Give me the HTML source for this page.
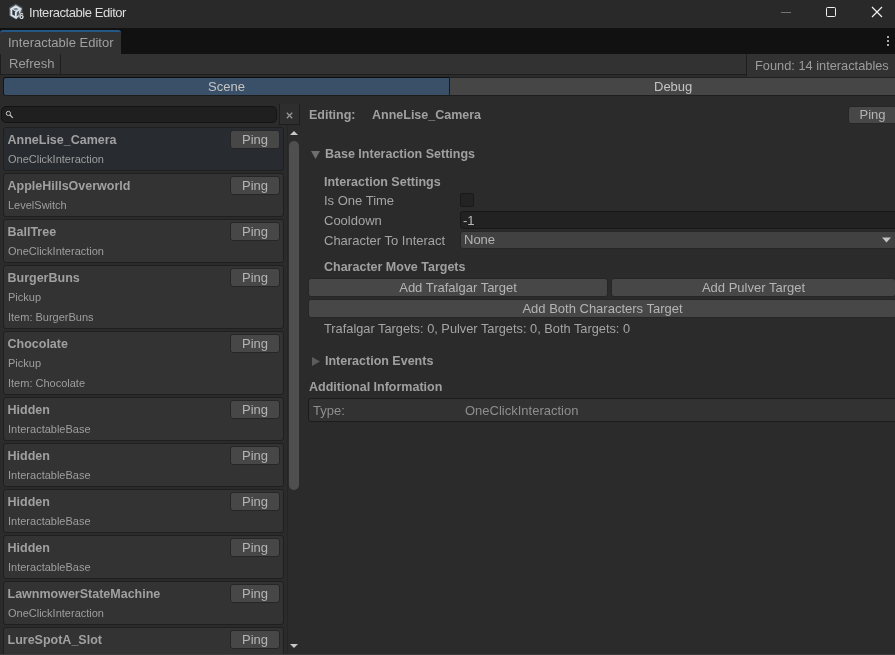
<!DOCTYPE html>
<html><head><meta charset="utf-8">
<style>
*{box-sizing:border-box;margin:0;padding:0}
html,body{width:895px;height:655px;overflow:hidden;background:#2b2b2b;will-change:transform;font-family:"Liberation Sans",sans-serif;color:#bdbdbd}
.abs{position:absolute}
#title{left:0;top:0;width:895px;height:28px;background:#292929}
#title .t{left:29px;top:5px;font-size:13px;letter-spacing:-0.45px;color:#dcdcdc;white-space:nowrap}
#tabs{left:0;top:28px;width:895px;height:26px;background:#111111}
#tab{left:0;top:2px;width:121px;height:24px;background:#323232;border-top:2px solid #265886;border-radius:3px 3px 0 0}
#tab .t{left:8px;top:3px;font-size:13px;color:#a0a0a0;white-space:nowrap}
#toolbar{left:0;top:54px;width:895px;height:23px;background:#323232}
#band{left:0;top:75px;width:895px;height:23px;background:transparent}
.txt{position:absolute;white-space:nowrap}
.item{position:absolute;left:3px;width:281px;background:#333333;border:1px solid #1f1f1f;border-radius:3px}
.item.sel{background:#282b30}
.item .n{position:absolute;left:3.5px;top:5px;font-size:12.5px;font-weight:bold;color:#a0a0a0;white-space:nowrap}
.item .s1{position:absolute;left:4px;top:25px;font-size:11px;color:#9e9e9e;white-space:nowrap}
.item .s2{position:absolute;left:4px;top:45px;font-size:11px;color:#9e9e9e;white-space:nowrap}
.ping{position:absolute;left:226px;top:2px;width:50px;height:19px;background:#474747;border:1px solid #262626;border-radius:3px;font-size:13px;color:#b4b4b4;text-align:center;line-height:18px}
.btn{position:absolute;height:18px;background:#474747;border:1px solid #262626;border-radius:3px;font-size:13px;color:#b4b4b4;text-align:center;line-height:16px;white-space:nowrap}
.lbl{position:absolute;font-size:13px;color:#a4a4a4;white-space:nowrap}
.bold{font-weight:bold;font-size:12.5px;color:#a0a0a0}
</style></head><body>
<div id="title" class="abs">
  <svg class="abs" style="left:8px;top:3px" width="17" height="18" viewBox="0 0 17 18">
    <path d="M7.8 0.8 L14.4 4.6 L14.4 12.7 L7.8 16.4 L1.3 12.7 L1.3 4.6 Z" fill="#56646f"/>
    <path d="M7.8 3.4 L12.3 6 L7.8 8.7 L3.4 6 Z" fill="#7d8b96" stroke="#dde4ea" stroke-width="1.9"/>
    <path d="M3.4 6 L3.4 12 L7.8 14.5 L7.8 8.7" fill="#2a333c" stroke="#dde4ea" stroke-width="1.9"/>
    <path d="M7.8 14.5 L11.2 12.6 L12.3 6" fill="#2a333c" stroke="#dde4ea" stroke-width="1.5"/>
    <text x="11" y="15.8" font-family="Liberation Sans" font-weight="bold" font-size="8.8" fill="#e8e8e8" stroke="#242424" stroke-width="1.1" paint-order="stroke">6</text>
  </svg>
  <div class="abs t">Interactable Editor</div>
  <div class="abs" style="left:781px;top:12px;width:10px;height:1px;background:#747474"></div>
  <div class="abs" style="left:826px;top:7px;width:10px;height:10px;border:1.3px solid #f0f0f0;border-radius:1.5px"></div>
  <svg class="abs" style="left:871px;top:6px" width="12" height="12" viewBox="0 0 12 12"><path d="M1 1 L11 11 M11 1 L1 11" stroke="#f0f0f0" stroke-width="1.2"/></svg>
</div>
<div id="tabs" class="abs">
  <div id="tab" class="abs"><div class="abs t">Interactable Editor</div></div>
  <div class="abs" style="left:887px;top:8px;width:2px;height:2px;background:#a8a8a8"></div>
  <div class="abs" style="left:887px;top:12px;width:2px;height:2px;background:#a8a8a8"></div>
  <div class="abs" style="left:887px;top:16px;width:2px;height:2px;background:#a8a8a8"></div>
</div>
<div id="toolbar" class="abs">
  <div class="abs" style="left:0;top:20px;width:747px;height:1px;background:#1e1e1e"></div>
  <div class="abs" style="left:0;top:21px;width:747px;height:2px;background:#2b2b2b"></div>
  <div class="abs" style="left:0;top:0;width:1px;height:20px;background:#1e1e1e"></div>
  <div class="abs" style="left:60px;top:0;width:1px;height:20px;background:#1e1e1e"></div>
  <div class="txt" style="left:9px;top:2px;font-size:13px;color:#9e9e9e">Refresh</div>
  <div class="abs" style="left:746px;top:0;width:1px;height:22px;background:#1e1e1e"></div>
  <div class="txt" style="left:755px;top:4px;font-size:12.8px;color:#9c9c9c">Found: 14 interactables</div>
</div>
<div id="band" class="abs">
  <div class="abs" style="left:3px;top:2px;width:447px;height:19px;background:#3a5068;border:1px solid #151515;border-top-color:#0c0c0c;border-bottom-color:#1c1c1c;border-radius:3px 0 0 3px"></div>
  <div class="abs" style="left:449px;top:2px;width:447px;height:19px;background:#464646;border:1px solid #1a1a1a;border-top-color:#202020;border-bottom-color:#1e1e1e"></div>
  <div class="txt" style="left:208px;top:4px;font-size:13px;color:#c4c4c4">Scene</div>
  <div class="txt" style="left:654px;top:4px;font-size:13px;color:#c4c4c4">Debug</div>
</div>

<!-- left panel -->
<div class="abs" style="left:1px;top:106px;width:276px;height:17px;background:#1f1f1f;border:1px solid #141414;border-radius:5px"></div>
<svg class="abs" style="left:5px;top:110px" width="9" height="9" viewBox="0 0 9 9"><circle cx="3.4" cy="3.4" r="2.1" fill="none" stroke="#c4c4c4" stroke-width="1"/><path d="M5 5 L7.8 7.8" stroke="#c4c4c4" stroke-width="1.2"/></svg>
<div class="abs" style="left:279px;top:104px;width:21px;height:21px;border:1px solid #1e1e1e;border-top:none;background:#2e2e2e"></div>
<svg class="abs" style="left:286px;top:111.5px" width="7" height="7" viewBox="0 0 7 7"><path d="M0.8 0.8 L6.2 6.2 M6.2 0.8 L0.8 6.2" stroke="#969696" stroke-width="1.3"/></svg>

<div class="item sel" style="top:127px;height:44px"><div class="n">AnneLise_Camera</div><div class="s1">OneClickInteraction</div><div class="ping">Ping</div></div>
<div class="item" style="top:173px;height:44px"><div class="n">AppleHillsOverworld</div><div class="s1">LevelSwitch</div><div class="ping">Ping</div></div>
<div class="item" style="top:219px;height:44px"><div class="n">BallTree</div><div class="s1">OneClickInteraction</div><div class="ping">Ping</div></div>
<div class="item" style="top:265px;height:64px"><div class="n">BurgerBuns</div><div class="s1">Pickup</div><div class="s2">Item: BurgerBuns</div><div class="ping">Ping</div></div>
<div class="item" style="top:331px;height:64px"><div class="n">Chocolate</div><div class="s1">Pickup</div><div class="s2">Item: Chocolate</div><div class="ping">Ping</div></div>
<div class="item" style="top:397px;height:44px"><div class="n">Hidden</div><div class="s1">InteractableBase</div><div class="ping">Ping</div></div>
<div class="item" style="top:443px;height:44px"><div class="n">Hidden</div><div class="s1">InteractableBase</div><div class="ping">Ping</div></div>
<div class="item" style="top:489px;height:44px"><div class="n">Hidden</div><div class="s1">InteractableBase</div><div class="ping">Ping</div></div>
<div class="item" style="top:535px;height:44px"><div class="n">Hidden</div><div class="s1">InteractableBase</div><div class="ping">Ping</div></div>
<div class="item" style="top:581px;height:44px"><div class="n">LawnmowerStateMachine</div><div class="s1">OneClickInteraction</div><div class="ping">Ping</div></div>
<div class="item" style="top:627px;height:44px"><div class="n">LureSpotA_Slot</div><div class="s1">OneClickInteraction</div><div class="ping">Ping</div></div>

<!-- scrollbar -->
<div class="abs" style="left:287px;top:125px;width:1px;height:530px;background:#252525"></div>
<svg class="abs" style="left:290px;top:130px" width="8" height="6" viewBox="0 0 8 6"><path d="M0 5 L4 1 L8 5 Z" fill="#c8c8c8"/></svg>
<div class="abs" style="left:289px;top:141px;width:10px;height:349px;background:#4f4f4f;border-radius:5px"></div>
<svg class="abs" style="left:290px;top:643px" width="8" height="6" viewBox="0 0 8 6"><path d="M0 1 L4 5 L8 1 Z" fill="#c8c8c8"/></svg>

<!-- right panel -->
<div class="lbl bold" style="left:309px;top:108px">Editing:</div>
<div class="lbl bold" style="left:372px;top:108px">AnneLise_Camera</div>
<div class="btn" style="left:848px;top:106px;width:49px;height:18px;line-height:16px">Ping</div>

<svg class="abs" style="left:311px;top:151px" width="9" height="8" viewBox="0 0 9 8"><path d="M0 0 L9 0 L4.5 8 Z" fill="#6e6e6e"/></svg>
<div class="lbl bold" style="left:325px;top:147px">Base Interaction Settings</div>
<div class="lbl bold" style="left:324px;top:175px">Interaction Settings</div>
<div class="lbl" style="left:324px;top:193px">Is One Time</div>
<div class="abs" style="left:460px;top:193px;width:14px;height:14px;background:#232323;border:1px solid #1a1a1a;border-radius:2px"></div>
<div class="lbl" style="left:324px;top:213px">Cooldown</div>
<div class="abs" style="left:460px;top:211px;width:440px;height:18px;background:#222222;border:1px solid #171717;border-radius:3px"></div>
<div class="lbl" style="left:463px;top:213px;color:#b8b8b8">-1</div>
<div class="lbl" style="left:324px;top:233px">Character To Interact</div>
<div class="abs" style="left:460px;top:231px;width:440px;height:18px;background:#414141;border:1px solid #262626;border-radius:3px"></div>
<div class="lbl" style="left:464px;top:232px;color:#b4b4b4">None</div>
<svg class="abs" style="left:882px;top:237px" width="9" height="6" viewBox="0 0 9 6"><path d="M0 0.5 L9 0.5 L4.5 5.5 Z" fill="#c4c4c4"/></svg>

<div class="lbl bold" style="left:324px;top:260px">Character Move Targets</div>
<div class="btn" style="left:308px;top:278px;width:300px;height:19px;line-height:17px">Add Trafalgar Target</div>
<div class="btn" style="left:611px;top:278px;width:285px;height:19px;line-height:17px">Add Pulver Target</div>
<div class="btn" style="left:308px;top:299px;width:589px;height:19px;line-height:17px">Add Both Characters Target</div>
<div class="lbl" style="left:324px;top:321px;font-size:12.8px">Trafalgar Targets: 0, Pulver Targets: 0, Both Targets: 0</div>

<svg class="abs" style="left:312px;top:357px" width="8" height="9" viewBox="0 0 8 9"><path d="M0 0 L8 4.5 L0 9 Z" fill="#5c5c5c"/></svg>
<div class="lbl bold" style="left:325px;top:354px">Interaction Events</div>
<div class="lbl bold" style="left:309px;top:380px">Additional Information</div>
<div class="abs" style="left:308px;top:398px;width:600px;height:24px;background:#323232;border:1px solid #1c1c1c;border-radius:3px"></div>
<div class="lbl" style="left:313px;top:403px;color:#8e8e8e">Type:</div>
<div class="lbl" style="left:465px;top:403px;color:#8e8e8e">OneClickInteraction</div>
<div class="abs" style="left:0;top:654px;width:895px;height:1px;background:#3d3d3d"></div>
</body></html>
